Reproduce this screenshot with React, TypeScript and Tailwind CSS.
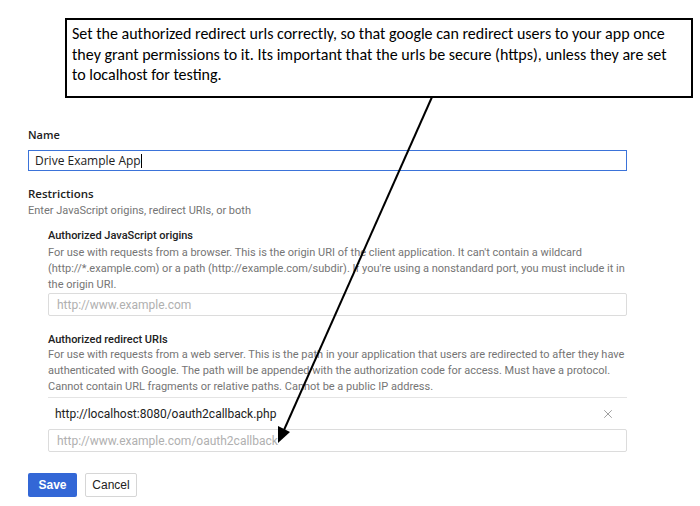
import { X } from "lucide-react";

const roboto = { fontFamily: "Roboto, 'Liberation Sans', sans-serif" };
const openSans = { fontFamily: "'Open Sans', sans-serif" };

const Field = ({ placeholder }: { placeholder: string }) => (
  <div className="h-[23px] w-[579px] border border-[#dcdcdc] rounded-[2px] flex items-center px-[8px] text-[12px] text-[#b0b0b0]">
    {placeholder}
  </div>
);

export default function App() {
  return (
    <div className="relative w-[700px] h-[506px] bg-white overflow-hidden" style={roboto}>
      {/* annotation */}
      <div className="pt-[18px] pl-[65px]">
        <div
          className="w-[628px] h-[80px] border-2 border-black px-[5px] pt-[4px] text-[16px] leading-[20.5px] text-black whitespace-nowrap"
          style={{ fontFamily: "Carlito, Calibri, 'Open Sans', sans-serif" }}
        >
          Set the authorized redirect urls correctly, so that google can redirect users to your app once
          <br />
          they grant permissions to it. Its important that the urls be secure (https), unless they are set
          <br />
          to localhost for testing.
        </div>
      </div>

      <div className="pl-[28px] pt-[30px]">
        <div className="text-[11px] font-semibold text-[#212121] leading-[14px]" style={openSans}>
          Name
        </div>
        <div
          className="mt-[8px] h-[21px] w-[599px] border border-[#3b73d9] flex items-center px-[6px] text-[12px] text-[#212121]"
          style={openSans}
        >
          Drive Example App
          <span className="inline-block w-px h-[14px] bg-black" />
        </div>

        <div className="mt-[16px] text-[11.5px] font-semibold text-[#212121] leading-[14px]" style={openSans}>
          Restrictions
        </div>
        <div className="mt-[3px] text-[11px] leading-[14px] text-[#757575]">Enter JavaScript origins, redirect URIs, or both</div>

        <div className="pl-[20px] pt-[11px]">
          <div className="text-[11px] font-medium leading-[14px] text-[#212121]">Authorized JavaScript origins</div>
          <div className="mt-[2px] w-[582px] text-[11px] leading-[16px] text-[#757575]">
            For use with requests from a browser. This is the origin URI of the client application. It can't contain a wildcard
            (http://*.example.com) or a path (http://example.com/subdir). If you're using a nonstandard port, you must include it in
            the origin URI.
          </div>
          <Field placeholder="http://www.example.com" />

          <div className="mt-[17px] text-[11px] font-medium leading-[14px] text-[#212121]">Authorized redirect URIs</div>
          <div className="w-[582px] text-[11px] leading-[16px] text-[#757575]">
            For use with requests from a web server. This is the path in your application that users are redirected to after they have
            authenticated with Google. The path will be appended with the authorization code for access. Must have a protocol.
            Cannot contain URL fragments or relative paths. Cannot be a public IP address.
          </div>
          <div className="mt-[2px] w-[579px] border-t border-[#e4e4e4] h-[32px] flex items-center justify-between pl-[7px] pr-[12px]">
            <span className="text-[12px] text-[#212121]">http://localhost:8080/oauth2callback.php</span>
            <X size={14} strokeWidth={1.4} className="text-[#8a8a8a]" />
          </div>
          <Field placeholder="http://www.example.com/oauth2callback" />
        </div>

        <div className="mt-[21px] flex gap-[8px]">
          <button
            className="h-[24px] w-[49px] rounded-[2px] bg-[#3367d6] text-white text-[12px] font-semibold"
            style={{ fontFamily: "'Liberation Sans', sans-serif" }}
          >
            Save
          </button>
          <button
            className="h-[24px] w-[52px] rounded-[2px] border border-[#d6d6d6] bg-white text-[#212121] text-[12px]"
            style={{ fontFamily: "'Liberation Sans', sans-serif" }}
          >
            Cancel
          </button>
        </div>
      </div>

      {/* arrow overlay */}
      <svg className="absolute left-0 top-0" width="700" height="506" viewBox="0 0 700 506">
        <line x1="432" y1="97" x2="284" y2="430" stroke="black" strokeWidth="2" />
        <polygon points="278,443 278,426 290,432" fill="black" />
      </svg>
    </div>
  );
}
